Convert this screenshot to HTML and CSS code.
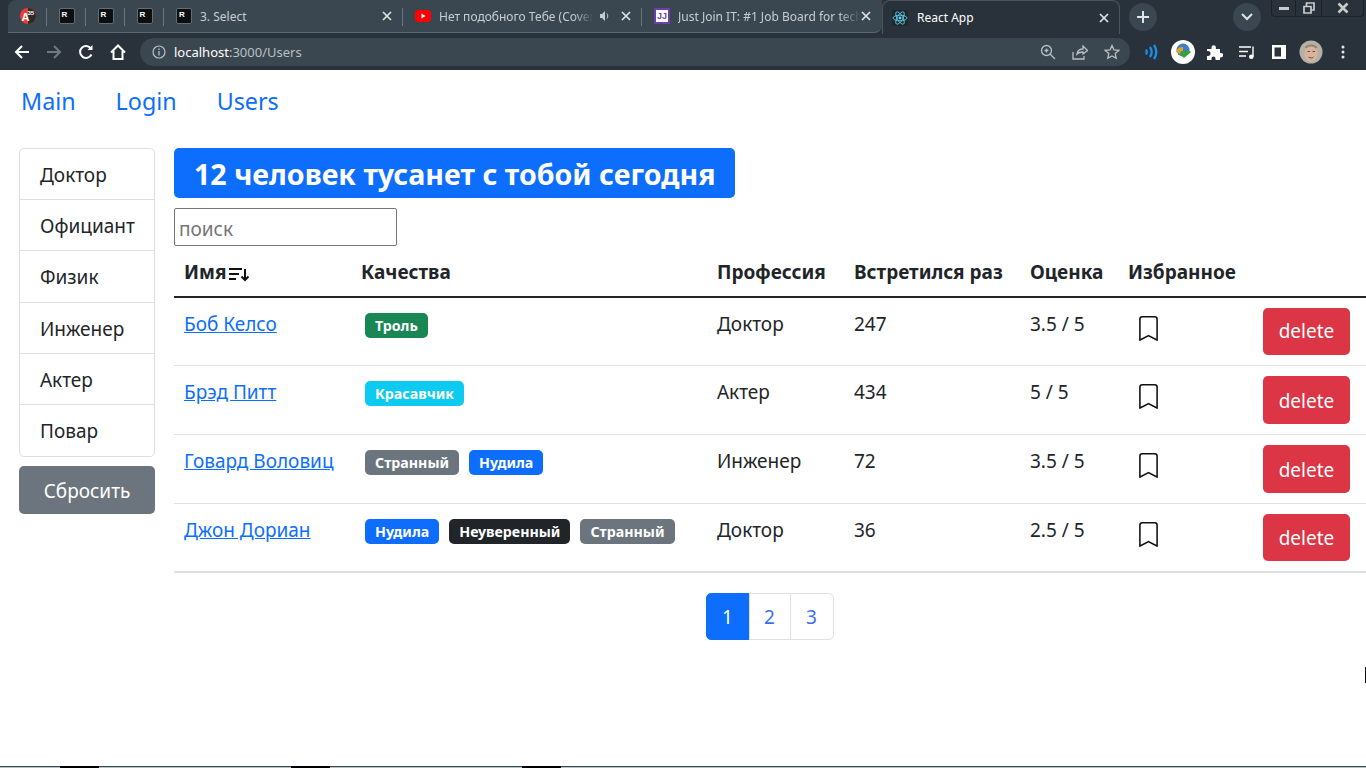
FILE: index.html
```html
<!DOCTYPE html>
<html lang="en">
<head>
    <meta charset="UTF-8">
    <meta name="viewport" content="width=device-width, initial-scale=1.0">
    <title>React App</title>
    <link rel="stylesheet" href="styles.css">
</head>
<body>
    <div class="browser">
        <div class="tabstrip">
            <div class="tab tab-small first">
                <svg class="fav" viewBox="0 0 16 16"><circle cx="8" cy="8" r="8" fill="#ee3b2f"/><path d="M8 0a8 8 0 0 1 0 16z" fill="#2b2b2b"/><text x="1.5" y="13" class="fav-a">A</text><text x="7.5" y="7" class="fav-n">35</text></svg>
            </div>
            <div class="tab tab-small"><span class="fav-r">R</span></div>
            <div class="tab tab-small"><span class="fav-r">R</span></div>
            <div class="tab tab-small"><span class="fav-r">R</span></div>
            <div class="tab tab-wide">
                <span class="fav-r">R</span>
                <span class="tab-title">3. Select</span>
                <svg class="tab-x" viewBox="0 0 10 10"><path d="M1 1l8 8M9 1l-8 8"/></svg>
            </div>
            <div class="tab tab-wide">
                <svg class="fav" viewBox="0 0 16 16"><rect y="2" width="16" height="12" rx="3" fill="#f00"/><path d="M6.5 5.5v5L10.5 8z" fill="#fff"/></svg>
                <span class="tab-title fade">Нет подобного Тебе (Cover</span>
                <svg class="tab-sound" viewBox="0 0 12 12"><path d="M1 4h2l3-3v10L3 8H1z" fill="#c5ccd0"/><path d="M8 3.5c1 1.4 1 3.6 0 5" stroke="#c5ccd0" fill="none"/></svg>
                <svg class="tab-x" viewBox="0 0 10 10"><path d="M1 1l8 8M9 1l-8 8"/></svg>
            </div>
            <div class="tab tab-wide last">
                <span class="fav-jj">JJ</span>
                <span class="tab-title fade">Just Join IT: #1 Job Board for tech</span>
                <svg class="tab-x" viewBox="0 0 10 10"><path d="M1 1l8 8M9 1l-8 8"/></svg>
            </div>
            <div class="tab-active">
                <svg class="fav" viewBox="0 0 16 16"><rect width="16" height="16" rx="2" fill="#20272c"/><g fill="none" stroke="#61dafb" stroke-width=".8"><ellipse cx="8" cy="8" rx="7" ry="2.8"/><ellipse cx="8" cy="8" rx="7" ry="2.8" transform="rotate(60 8 8)"/><ellipse cx="8" cy="8" rx="7" ry="2.8" transform="rotate(120 8 8)"/></g><circle cx="8" cy="8" r="1.4" fill="#61dafb"/></svg>
                <span class="tab-title">React App</span>
                <svg class="tab-x" viewBox="0 0 10 10"><path d="M1 1l8 8M9 1l-8 8"/></svg>
            </div>
            <div class="round-btn new-tab"><svg viewBox="0 0 12 12"><path d="M6 0v12M0 6h12"/></svg></div>
            <div class="round-btn tab-list"><svg viewBox="0 0 12 8"><path d="M1 1l5 5 5-5"/></svg></div>
            <div class="win-controls">
                <span class="win-btn"><svg viewBox="0 0 12 12"><rect x="1" y="5" width="10" height="3" fill="#c8ccce"/></svg></span>
                <span class="win-btn"><svg viewBox="0 0 12 12"><path d="M1 4.500h7v6.500H1zM3.500 4V1h7.500v7H8.500" fill="none" stroke="#c8ccce" stroke-width="1.700"/></svg></span>
                <span class="win-btn win-close"><svg viewBox="0 0 12 12"><path d="M1.500 1.500l9 9M10.500 1.500l-9 9" stroke="#c8ccce" stroke-width="2.600"/></svg></span>
            </div>
        </div>
        <div class="toolbar">
            <span class="tool"><svg viewBox="0 0 16 16"><path d="M15 8H2M8 2L2 8l6 6" class="ln-w"/></svg></span>
            <span class="tool"><svg viewBox="0 0 16 16"><path d="M1 8h13M8 2l6 6-6 6" class="ln-g"/></svg></span>
            <span class="tool"><svg viewBox="0 0 16 16"><path d="M13.500 10.500A6 6 0 1 1 13 4.500" class="ln-w"/><path d="M14.500 1v5h-5z" fill="#fff"/></svg></span>
            <span class="tool"><svg viewBox="0 0 16 16"><path d="M1 8.500L8 1.500l7 7M3.500 7V15h9V7" class="ln-w"/></svg></span>
            <div class="omnibox">
                <svg class="omni-info" viewBox="0 0 14 14"><circle cx="7" cy="7" r="6" fill="none" stroke="#b9c0c4" stroke-width="1.200"/><path d="M7 6v4.500M7 3.500v1.500" stroke="#b9c0c4" stroke-width="1.300"/></svg>
                <span class="url"><span class="url-host">localhost</span>:3000/Users</span>
                <span class="omni-icons">
                    <svg viewBox="0 0 16 16"><circle cx="6.500" cy="6.500" r="5" class="ln-o"/><path d="M10 10l5 5M4.500 6.500h4M6.500 4.500v4" class="ln-o"/></svg>
                    <svg viewBox="0 0 16 16"><path d="M1 8v7h11v-3M5 10c.5-3 3-5 6-5V2l4.500 4.500L11 10V8c-2.500 0-4.500.5-6 2z" class="ln-o"/></svg>
                    <svg viewBox="0 0 16 16"><path d="M8 1.500l2 4.400 4.800.5-3.600 3.200 1 4.700L8 11.900l-4.200 2.400 1-4.700L1.200 6.400 6 5.900z" class="ln-o"/></svg>
                </span>
            </div>
            <span class="tool"><svg viewBox="0 0 16 16"><path d="M3 5.500c1 1.600 1 3.400 0 5M7 3c2 3 2 7 0 10M11 1c3 4.500 3 9.500 0 14" fill="none" stroke="#1a8fe8" stroke-width="2.300"/></svg></span>
            <span class="tool"><svg class="big" viewBox="0 0 24 24"><circle cx="12" cy="12" r="12" fill="#fff"/><circle cx="12" cy="10" r="6.500" fill="#3d7fc4"/><path d="M5 12a7 7 0 0 1 7-5v4a3 3 0 0 0-3 3z" fill="#e2a12a"/><path d="M7 14h3v-3h7v-1l3 2-7 6-3-3H7z" fill="#37a238"/></svg></span>
            <span class="tool"><svg class="puzzle" viewBox="0 0 16 16"><path d="M0 5h4.500V3.500a2.200 2.200 0 0 1 4.400 0V5H13v4h1a2.200 2.200 0 0 1 0 4.400h-1V16H8.500v-1.500a2 2 0 0 0-4 0V16H0v-4h1a2.500 2.500 0 0 0 0-5H0z" fill="#fff"/></svg></span>
            <span class="tool"><svg viewBox="0 0 16 16"><path d="M0 3h12M0 7.500h9M0 12h7" class="ln-w thin"/><path d="M14 2.500v10" class="ln-w thin"/><circle cx="12.300" cy="12.800" r="2.300" fill="#fff"/></svg></span>
            <span class="tool"><svg viewBox="0 0 16 16"><path d="M1 1h14v14H1zM3.500 3.500v9H10v-9z" fill="#fff" fill-rule="evenodd"/></svg></span>
            <span class="tool"><svg class="big" viewBox="0 0 24 24"><circle cx="12" cy="12" r="11.500" fill="#b6b1a6"/><ellipse cx="12" cy="13.500" rx="6.500" ry="8.500" fill="#d8b49c"/><path d="M6.500 8c2-3.500 9-3.500 11 0" stroke="#8f8676" stroke-width="2" fill="none"/><path d="M8.500 11.500h2.500M13.500 11.500h2.500M9.500 17c2 1.300 3.500 1.300 5 0" stroke="#6a4a3c" fill="none"/></svg></span>
            <span class="tool"><svg viewBox="0 0 16 16"><circle cx="8" cy="3" r="1.500" fill="#e6e8e9"/><circle cx="8" cy="8" r="1.500" fill="#e6e8e9"/><circle cx="8" cy="13" r="1.500" fill="#e6e8e9"/></svg></span>
        </div>
    </div>

    <nav class="topnav">
        <a href="#">Main</a>
        <a href="#">Login</a>
        <a href="#">Users</a>
    </nav>

    <main class="content">
        <aside class="sidebar">
            <ul class="prof-list">
                <li>Доктор</li>
                <li>Официант</li>
                <li>Физик</li>
                <li>Инженер</li>
                <li>Актер</li>
                <li>Повар</li>
            </ul>
            <button class="btn btn-reset">Сбросить</button>
        </aside>
        <section class="users">
            <h2 class="title">12 человек тусанет с тобой сегодня</h2>
            <input class="search" type="text" placeholder="поиск">
            <table class="users-table">
                <colgroup>
                    <col class="c-name"><col class="c-qual"><col class="c-prof"><col class="c-met"><col class="c-rate"><col class="c-fav"><col>
                </colgroup>
                <thead>
                    <tr>
                        <th>Имя<svg class="sort" viewBox="0 0 22 16"><path d="M1 3h13M1 8h10M1 13h7" stroke-width="2"/><path d="M17 3v11M13.500 10.500l3.500 3.500 3.500-3.500" stroke-width="2"/></svg></th>
                        <th>Качества</th>
                        <th>Профессия</th>
                        <th>Встретился раз</th>
                        <th>Оценка</th>
                        <th>Избранное</th>
                        <th></th>
                    </tr>
                </thead>
                <tbody>
                    <tr>
                        <td><a href="#">Боб Келсо</a></td>
                        <td><span class="badge green">Троль</span></td>
                        <td>Доктор</td>
                        <td>247</td>
                        <td>3.5 / 5</td>
                        <td><svg class="bookmark" viewBox="0 0 16 16"><path d="M2 2a2 2 0 0 1 2-2h8a2 2 0 0 1 2 2v13.500a.5.5 0 0 1-.777.416L8 13.101l-5.223 2.815A.5.5 0 0 1 2 15.500V2zm2-1a1 1 0 0 0-1 1v12.566l4.723-2.482a.5.5 0 0 1 .554 0L13 14.566V2a1 1 0 0 0-1-1H4z"/></svg></td>
                        <td><button class="btn btn-delete">delete</button></td>
                    </tr>
                    <tr>
                        <td><a href="#">Брэд Питт</a></td>
                        <td><span class="badge cyan">Красавчик</span></td>
                        <td>Актер</td>
                        <td>434</td>
                        <td>5 / 5</td>
                        <td><svg class="bookmark" viewBox="0 0 16 16"><path d="M2 2a2 2 0 0 1 2-2h8a2 2 0 0 1 2 2v13.500a.5.5 0 0 1-.777.416L8 13.101l-5.223 2.815A.5.5 0 0 1 2 15.500V2zm2-1a1 1 0 0 0-1 1v12.566l4.723-2.482a.5.5 0 0 1 .554 0L13 14.566V2a1 1 0 0 0-1-1H4z"/></svg></td>
                        <td><button class="btn btn-delete">delete</button></td>
                    </tr>
                    <tr>
                        <td><a href="#">Говард Воловиц</a></td>
                        <td><span class="badge gray">Странный</span><span class="badge blue">Нудила</span></td>
                        <td>Инженер</td>
                        <td>72</td>
                        <td>3.5 / 5</td>
                        <td><svg class="bookmark" viewBox="0 0 16 16"><path d="M2 2a2 2 0 0 1 2-2h8a2 2 0 0 1 2 2v13.500a.5.5 0 0 1-.777.416L8 13.101l-5.223 2.815A.5.5 0 0 1 2 15.500V2zm2-1a1 1 0 0 0-1 1v12.566l4.723-2.482a.5.5 0 0 1 .554 0L13 14.566V2a1 1 0 0 0-1-1H4z"/></svg></td>
                        <td><button class="btn btn-delete">delete</button></td>
                    </tr>
                    <tr>
                        <td><a href="#">Джон Дориан</a></td>
                        <td><span class="badge blue">Нудила</span><span class="badge dark">Неуверенный</span><span class="badge gray">Странный</span></td>
                        <td>Доктор</td>
                        <td>36</td>
                        <td>2.5 / 5</td>
                        <td><svg class="bookmark" viewBox="0 0 16 16"><path d="M2 2a2 2 0 0 1 2-2h8a2 2 0 0 1 2 2v13.500a.5.5 0 0 1-.777.416L8 13.101l-5.223 2.815A.5.5 0 0 1 2 15.500V2zm2-1a1 1 0 0 0-1 1v12.566l4.723-2.482a.5.5 0 0 1 .554 0L13 14.566V2a1 1 0 0 0-1-1H4z"/></svg></td>
                        <td><button class="btn btn-delete">delete</button></td>
                    </tr>
                </tbody>
            </table>
            <ul class="pagination">
                <li class="active">1</li>
                <li>2</li>
                <li>3</li>
            </ul>
        </section>
    </main>

    <span class="cursor-mark"></span>
    <div class="taskstrip">
        <span class="seg"></span><span class="seg-dark"></span>
        <span class="seg"></span><span class="seg-dark"></span>
        <span class="seg"></span><span class="seg-dark"></span>
        <span class="seg seg-rest"></span>
    </div>
</body>
</html>
```

FILE: styles.css
```css
html, body { height: 100%; }

body {
    margin: 0;
    height: 768px;
    overflow: hidden;
    display: flex;
    flex-direction: column;
    position: relative;
    background: #fff;
    color: #212529;
    font-family: "Noto Sans", "Open Sans", sans-serif;
    font-size: 19px;
    line-height: 30px;
}

a { color: #0d6efd; }

/* browser chrome */
.browser {
    height: 70px;
    flex: none;
    background: #29323a;
    font-size: 12px;
    line-height: 16px;
}

.tabstrip {
    height: 34px;
    display: flex;
    padding-left: 8px;
}

.tab {
    height: 33px;
    display: flex;
    align-items: center;
    box-sizing: border-box;
    background: #3a4750;
    border-bottom: 1px solid #5b6970;
    position: relative;
}
.tab.first { border-top-left-radius: 8px; }
.tab.last { border-radius: 0 0 8px 0; }
.tab::after {
    content: "";
    position: absolute;
    right: 0;
    top: 8px;
    height: 18px;
    width: 1px;
    background: #6b777e;
}
.tab.last::after { display: none; }

.tab-small {
    width: 39px;
    justify-content: center;
}

.tab-wide {
    width: 239px;
    padding: 0 11px 0 12px;
}
.tab-wide.last { width: 240px; }

.tab-active {
    width: 238px;
    height: 34px;
    box-sizing: border-box;
    display: flex;
    align-items: center;
    padding: 0 10px 0 9px;
    background: #29323a;
    border: 1px solid #4a565d;
    border-bottom: none;
    border-radius: 8px 8px 0 0;
    color: #fff;
}

.fav {
    width: 16px;
    height: 16px;
    flex: none;
}
.fav-a { font: bold 11px "Liberation Sans", sans-serif; fill: #fff; }
.fav-n { font: bold 6px "Liberation Sans", sans-serif; fill: #fff; }

.fav-r {
    width: 14px;
    height: 14px;
    flex: none;
    background: #0c0f11;
    border: 1px solid #666c70;
    border-radius: 2px;
    color: #fff;
    font: bold 8px/12px "Liberation Sans", sans-serif;
    text-indent: 2px;
}

.fav-jj {
    width: 12px;
    height: 12px;
    flex: none;
    background: #fff;
    border: 2px solid #6b3fa8;
    color: #6b3fa8;
    font: bold 9px/12px "Liberation Sans", sans-serif;
    text-align: center;
}

.tab-title {
    flex: 1;
    min-width: 0;
    margin-left: 8px;
    padding-top: 2px;
    overflow: hidden;
    white-space: nowrap;
    color: #c7ced2;
}
.tab-title.fade {
    -webkit-mask-image: linear-gradient(to right, #000 88%, transparent);
    mask-image: linear-gradient(to right, #000 88%, transparent);
}
.tab-active .tab-title { color: #fff; margin-left: 9px; padding-top: 0; }

.tab-sound {
    width: 12px;
    height: 12px;
    flex: none;
    margin: 0 10px 0 6px;
}

.tab-x {
    width: 10px;
    height: 10px;
    flex: none;
    fill: none;
    stroke: #dfe3e5;
    stroke-width: 1.700;
}

.round-btn {
    width: 28px;
    height: 28px;
    flex: none;
    margin-top: 3px;
    border-radius: 50%;
    background: #3a4750;
    display: flex;
    align-items: center;
    justify-content: center;
}
.round-btn svg { fill: none; stroke: #dfe3e5; stroke-width: 2; }
.new-tab { margin-left: 9px; }
.new-tab svg { width: 12px; height: 12px; }
.tab-list { margin-left: 76px; }
.tab-list svg { width: 12px; height: 8px; }

.win-controls {
    height: 16px;
    display: flex;
    margin-left: 10px;
    border: 1px solid #1b2227;
    border-top: none;
    border-radius: 0 0 4px 4px;
}
.win-btn {
    width: 24px;
    box-sizing: border-box;
    display: flex;
    align-items: center;
    justify-content: center;
    border-right: 1px solid #1b2227;
}
.win-btn + .win-btn { width: 26px; }
.win-btn svg { width: 12px; height: 12px; }
.win-btn + .win-btn + .win-close { width: 41px; border-right: none; }

.toolbar {
    height: 36px;
    display: flex;
    align-items: center;
    padding-left: 6px;
}

.tool {
    width: 32px;
    height: 32px;
    flex: none;
    display: flex;
    align-items: center;
    justify-content: center;
}
.tool svg { width: 16px; height: 16px; }
.tool svg.big { width: 24px; height: 24px; }

.ln-w, .ln-g, .ln-o { fill: none; stroke-width: 2; }
.ln-w { stroke: #fff; }
.ln-g { stroke: #6f7a80; }
.ln-o { stroke: #b9c0c4; stroke-width: 1.300; }
.thin { stroke-width: 1.400; }

.omnibox {
    width: 990px;
    height: 28px;
    flex: none;
    margin: 0 5px 0 6px;
    padding: 0 10px 0 12px;
    box-sizing: border-box;
    display: flex;
    align-items: center;
    border-radius: 14px;
    background: #3a4750;
    color: #b9c0c4;
    font-size: 13px;
}
.omni-info { width: 14px; height: 14px; flex: none; }
.url { flex: 1; margin-left: 8px; }
.url-host { color: #fff; }
.omni-icons { display: flex; gap: 16px; }
.omni-icons svg { width: 16px; height: 16px; }

/* page */
.topnav {
    display: flex;
    margin-top: 3px;
}
.topnav a {
    padding: 10px 20px;
    font-size: 23.300px;
    line-height: 36px;
    text-decoration: none;
}
.topnav a:first-child { padding-left: 21px; }

.content {
    flex: 1;
    min-height: 0;
    display: flex;
    gap: 19px;
    padding: 19px 0 0 19px;
}

.sidebar {
    width: 136px;
    flex: none;
}

.prof-list {
    margin: 0 0 9px;
    padding: 0;
    list-style: none;
    border: 1px solid #dfdfdf;
    border-radius: 5px;
}
.prof-list li {
    padding: 11px 20px 0;
    height: 51.200px;
    box-sizing: border-box;
    border-bottom: 1px solid #dfdfdf;
}
.prof-list li:last-child { border-bottom: none; }

.btn {
    display: block;
    border: none;
    border-radius: 5px;
    color: #fff;
    font-family: inherit;
    font-size: 19px;
    line-height: 30px;
    height: 48px;
    cursor: pointer;
}
.btn-reset { width: 136px; padding-top: 2px; background: #6c757d; }
.btn-delete { width: 87px; margin-top: -1px; padding-top: 2px; background: #dc3545; }

.users {
    flex: 1;
    min-width: 0;
}

.title {
    display: inline-block;
    margin: 0 0 10px;
    padding: 0 20px;
    height: 50px;
    border-radius: 5px;
    background: #0d6efd;
    color: #fff;
    font-size: 28.600px;
    line-height: 52px;
    font-weight: 700;
    vertical-align: top;
}

.search {
    display: block;
    width: 223px;
    height: 38px;
    box-sizing: border-box;
    padding: 3px 4px 0;
    border: 1px solid #767676;
    border-radius: 2px;
    font-family: inherit;
    font-size: 19px;
}
.search::placeholder { color: #757575; }

.users-table {
    width: 1192px;
    table-layout: fixed;
    border-collapse: collapse;
    border-bottom: 2px solid #dee2e6;
}
.c-name { width: 177px; }
.c-qual { width: 356px; }
.c-prof { width: 137px; }
.c-met { width: 176px; }
.c-rate { width: 98px; }
.c-fav { width: 135px; }

.users-table th {
    height: 48px;
    padding: 2px 10px 0;
    box-sizing: content-box;
    text-align: left;
    font-weight: 700;
    border-bottom: 2px solid #212529;
    white-space: nowrap;
}

.users-table td {
    padding: 11px 10px 9px;
    height: 48px;
    vertical-align: top;
    border-bottom: 1px solid #dee2e6;
}
.users-table td:nth-child(2) { padding-left: 9px; }
.users-table td:nth-child(6) { padding-left: 18px; }
.users-table tr:first-child td,
.users-table tr:last-child td { height: 47px; }
.users-table tr:first-child .btn-delete,
.users-table tr:last-child .btn-delete { height: 47px; padding-top: 0; }
.users-table tr:last-child .btn-delete { padding-top: 2px; }
.users-table tr:last-child td { border-bottom: none; }

.sort {
    width: 22px;
    height: 16px;
    margin-left: 2px;
    vertical-align: -3px;
    fill: none;
    stroke: #111;
}

.bookmark {
    display: block;
    width: 25px;
    height: 25px;
    margin-top: 7px;
    fill: #111;
}

.badge {
    display: inline-block;
    margin: 4px 5px 5px;
    padding: 5px 10px;
    border-radius: 5px;
    color: #fff;
    font-size: 14.200px;
    line-height: 15px;
    font-weight: 700;
    vertical-align: top;
}
.green { background: #198754; }
.cyan { background: #0dcaf0; }
.gray { background: #6c757d; }
.blue { background: #0d6efd; }
.dark { background: #212529; }

.pagination {
    display: flex;
    justify-content: center;
    margin: 20px 0 0;
    padding: 0;
    list-style: none;
}
.pagination li {
    width: 44px;
    height: 47px;
    box-sizing: border-box;
    border: 1px solid #dee2e6;
    margin-left: -1px;
    color: #3a6ff0;
    text-align: center;
    line-height: 47px;
}
.pagination li:nth-child(2) { width: 42px; }
.pagination li:first-child { border-radius: 5px 0 0 5px; }
.pagination li:last-child { border-radius: 0 5px 5px 0; }
.pagination .active {
    background: #0d6efd;
    border-color: #0d6efd;
    color: #fff;
}

.cursor-mark {
    position: absolute;
    right: 0;
    top: 667px;
    width: 1px;
    height: 16px;
    background: #111;
}

.taskstrip {
    height: 2px;
    flex: none;
    display: flex;
    background: #a9c6de;
    border-top: 1px solid #444;
    box-sizing: border-box;
}
.seg { width: 192px; }
.seg:first-child { width: 60px; }
.seg-dark { width: 39px; height: 2px; margin-top: -1px; background: #000; }
.seg-rest { flex: 1; }
```
